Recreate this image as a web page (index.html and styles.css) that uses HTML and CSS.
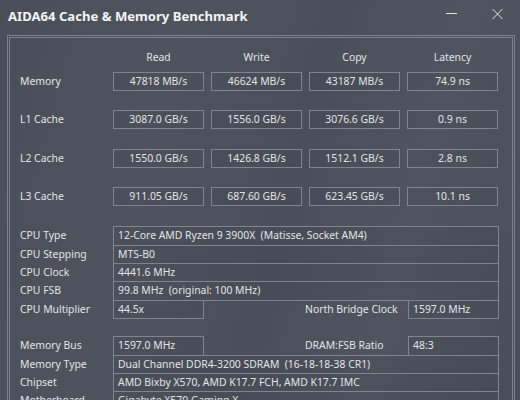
FILE: index.html
```html
<!DOCTYPE html>
<html>
<head>
<meta charset="utf-8">
<title>AIDA64 Cache &amp; Memory Benchmark</title>
<link rel="stylesheet" href="styles.css">
</head>
<body>
<div class="window">
  <div class="titlebar">
    <div class="title">AIDA64 Cache &amp; Memory Benchmark</div>
    <div class="controls">
      <svg class="ctl-min" width="11" height="10" viewBox="0 0 11 10"><path d="M0 4.5h11" stroke="#e4e5e8" stroke-width="1"/></svg>
      <svg class="ctl-close" width="11" height="10" viewBox="0 0 11 10"><path d="M0.5 0l10 10M10.5 0l-10 10" stroke="#e4e5e8" stroke-width="1"/></svg>
    </div>
  </div>
  <div class="frame">
    <div class="inner">
      <div class="bench-head">
        <div></div>
        <div class="col-title">Read</div>
        <div class="col-title">Write</div>
        <div class="col-title">Copy</div>
        <div class="col-title">Latency</div>
      </div>
      <div class="bench">
        <div class="label">Memory</div>
        <div class="cell">47818 MB/s</div>
        <div class="cell">46624 MB/s</div>
        <div class="cell">43187 MB/s</div>
        <div class="cell">74.9 ns</div>

        <div class="label">L1 Cache</div>
        <div class="cell">3087.0 GB/s</div>
        <div class="cell">1556.0 GB/s</div>
        <div class="cell">3076.6 GB/s</div>
        <div class="cell">0.9 ns</div>

        <div class="label">L2 Cache</div>
        <div class="cell">1550.0 GB/s</div>
        <div class="cell">1426.8 GB/s</div>
        <div class="cell">1512.1 GB/s</div>
        <div class="cell">2.8 ns</div>

        <div class="label">L3 Cache</div>
        <div class="cell">911.05 GB/s</div>
        <div class="cell">687.60 GB/s</div>
        <div class="cell">623.45 GB/s</div>
        <div class="cell">10.1 ns</div>
      </div>

      <div class="info">
        <div class="row">
          <div class="label">CPU Type</div>
          <div class="val wide">12-Core AMD Ryzen 9 3900X&nbsp; (Matisse, Socket AM4)</div>
        </div>
        <div class="row">
          <div class="label">CPU Stepping</div>
          <div class="val wide">MTS-B0</div>
        </div>
        <div class="row">
          <div class="label">CPU Clock</div>
          <div class="val wide">4441.6 MHz</div>
        </div>
        <div class="row">
          <div class="label">CPU FSB</div>
          <div class="val wide">99.8 MHz&nbsp; (original: 100 MHz)</div>
        </div>
        <div class="row">
          <div class="label">CPU Multiplier</div>
          <div class="val small">44.5x</div>
          <div class="mid-label">North Bridge Clock</div>
          <div class="val small">1597.0 MHz</div>
        </div>
      </div>

      <div class="info info2">
        <div class="row">
          <div class="label">Memory Bus</div>
          <div class="val small">1597.0 MHz</div>
          <div class="mid-label">DRAM:FSB Ratio</div>
          <div class="val small">48:3</div>
        </div>
        <div class="row">
          <div class="label">Memory Type</div>
          <div class="val wide">Dual Channel DDR4-3200 SDRAM&nbsp; (16-18-18-38 CR1)</div>
        </div>
        <div class="row">
          <div class="label">Chipset</div>
          <div class="val wide">AMD Bixby X570, AMD K17.7 FCH, AMD K17.7 IMC</div>
        </div>
        <div class="row">
          <div class="label">Motherboard</div>
          <div class="val wide">Gigabyte X570 Gaming X</div>
        </div>
      </div>
    </div>
  </div>
</div>
</body>
</html>
```
FILE: styles.css
```css
html, body {
  margin: 0;
  padding: 0;
  height: 100%;
  overflow: hidden;
}
body {
  background: linear-gradient(105deg, #4a4e59 0%, #4f535e 30%, #4b4f5a 55%, #50545f 75%, #4a4e59 100%);
  color: #e3e4e7;
  font-family: "Noto Sans", "DejaVu Sans", sans-serif;
  font-size: 10.4px;
}
.window {
  display: flex;
  flex-direction: column;
  height: 100%;
}
.titlebar {
  display: flex;
  justify-content: space-between;
  align-items: flex-start;
  height: 35px;
  flex: none;
}
.title {
  font-weight: 700;
  font-size: 13.1px;
  line-height: 16px;
  padding: 8px 0 0 8px;
  color: #f2f3f5;
}
.controls {
  display: flex;
  align-items: flex-start;
  gap: 35px;
  padding: 9px 17px 0 0;
}
.ctl-min, .ctl-close {
  display: block;
}
.frame {
  flex: 1;
  margin: 0 5px 0 7px;
  border: 1px solid #7d818b;
  border-bottom: none;
  padding: 1px 1px 0 1px;
  display: flex;
}
.inner {
  flex: 1;
  border: 1px solid #7d818b;
  border-bottom: none;
}
.bench-head,
.bench {
  display: grid;
  grid-template-columns: 96px repeat(4, 91px);
  column-gap: 7px;
}
.bench-head {
  padding-top: 10px;
  height: 18px;
  line-height: 18px;
  margin-bottom: 5.5px;
}
.col-title {
  text-align: center;
}
.bench {
  grid-auto-rows: 19px;
  row-gap: 19.67px;
  line-height: 17px;
}
.label {
  padding-left: 10px;
  white-space: nowrap;
}
.bench .label {
  line-height: 19px;
}
.cell {
  border: 1px solid #7f848e;
  background: rgba(0, 0, 0, 0.035);
  text-align: center;
  white-space: nowrap;
}
.info {
  margin-top: 20px;
  display: flex;
  flex-direction: column;
}
.info2 {
  margin-top: 17.3px;
}
.row {
  display: flex;
  height: 19.33px;
  margin-top: -1px;
  line-height: 17.33px;
}
.row:first-child {
  margin-top: 0;
}
.row .label {
  width: 93px;
  flex: none;
  line-height: 19.33px;
}
.val {
  border: 1px solid #7f848e;
  background: rgba(0, 0, 0, 0.035);
  padding-left: 4px;
  white-space: nowrap;
  overflow: hidden;
  box-sizing: border-box;
  flex: none;
}
.val.wide {
  width: 386px;
}
.val.small {
  width: 91px;
}
.mid-label {
  width: 204px;
  flex: none;
  box-sizing: border-box;
  padding-left: 101px;
  line-height: 19.33px;
  white-space: nowrap;
}
```
